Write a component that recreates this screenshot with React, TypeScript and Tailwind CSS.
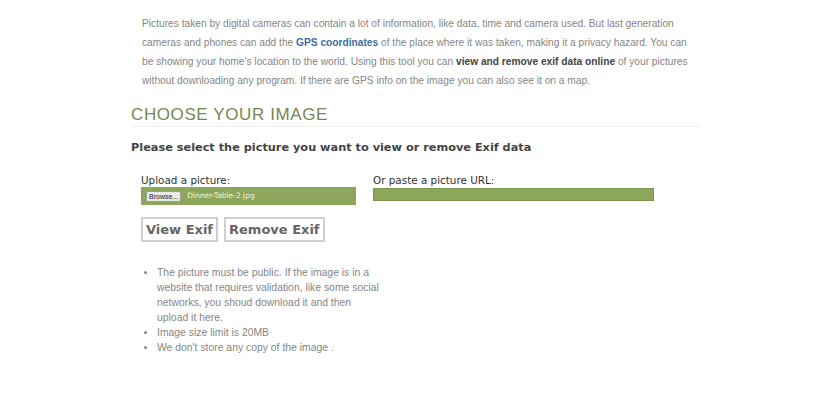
export default function App() {
  return (
    <div className="w-[825px] h-[395px] bg-white overflow-hidden">
      <div className="pl-[131px] pt-[14px] w-[700px]">
        <p className="pl-[11px] text-[10.2px] leading-[19px] text-[#868686] whitespace-nowrap font-['Liberation_Sans',Arial,sans-serif]">
          Pictures taken by digital cameras can contain a lot of information, like data, time and camera used. But last generation
          <br />
          cameras and phones can add the <b className="text-[#3f6e9e]">GPS coordinates</b> of the place where it was taken, making it a privacy hazard. You can
          <br />
          be showing your home's location to the world. Using this tool you can <b className="text-[#444]">view and remove exif data online</b> of your pictures
          <br />
          without downloading any program. If there are GPS info on the image you can also see it on a map.
        </p>

        <h2 className="mt-[15px] pb-[1px] border-b border-[#eeeeee] text-[17px] leading-[20px] text-[#76874f] font-['Liberation_Sans',Arial,sans-serif] tracking-[0.6px]">
          CHOOSE YOUR IMAGE
        </h2>

        <h3 className="mt-[13px] text-[11.3px] leading-[16px] font-bold text-[#444] font-['DejaVu_Sans',Verdana,sans-serif]">
          Please select the picture you want to view or remove Exif data
        </h3>

        <div className="mt-[17px] pl-[10px] flex gap-[17px] font-['DejaVu_Sans',Verdana,sans-serif]">
          <div className="w-[215px]">
            <div className="text-[10.4px] leading-[14px] text-[#333]">Upload a picture:</div>
            <div className="h-[18px] bg-[#8ca65c] flex items-center pl-[5px] gap-[6px]">
              <span className="h-[11px] px-[2px] bg-[#e8e8e8] border border-[#9a9a9a] rounded-[2px] text-[7px] leading-[9px] text-[#222] font-['Liberation_Sans',Arial,sans-serif]">
                Browse...
              </span>
              <span className="text-[7.5px] text-[#eef3e0]">Dinner-Table-2.jpg</span>
            </div>
          </div>
          <div className="w-[281px]">
            <div className="text-[10.4px] leading-[14px] text-[#333]">Or paste a picture URL:</div>
            <div className="mt-[1px] h-[13px] bg-[#8ca65c] border border-[#7d9650]" />
          </div>
        </div>

        <div className="mt-[12px] pl-[10px] flex gap-[6px] font-['DejaVu_Sans',Verdana,sans-serif]">
          <button className="h-[25px] px-[3px] border-2 border-[#cfcfcf] bg-white text-[13px] font-bold text-[#666]">
            View Exif
          </button>
          <button className="h-[25px] px-[3px] border-2 border-[#cfcfcf] bg-white text-[13px] font-bold text-[#666]">
            Remove Exif
          </button>
        </div>

        <ul className="mt-[23px] pl-[26px] w-[250px] text-[10.4px] leading-[15px] text-[#868686] font-['Liberation_Sans',Arial,sans-serif] list-disc">
          <li>The picture must be public. If the image is in a website that requires validation, like some social networks, you shoud download it and then upload it here.</li>
          <li>Image size limit is 20MB</li>
          <li>We don't store any copy of the image .</li>
        </ul>
      </div>
    </div>
  );
}
